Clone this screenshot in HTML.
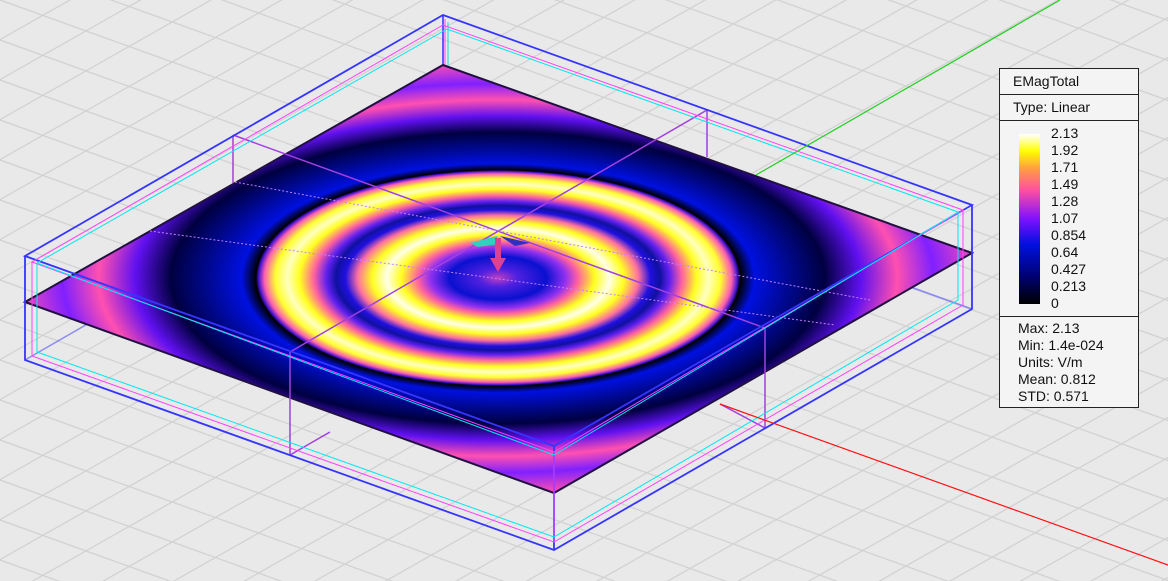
<!DOCTYPE html>
<html><head><meta charset="utf-8"><style>
html,body{margin:0;padding:0;width:1168px;height:581px;overflow:hidden;background:#e9e9e9;position:relative}
svg{position:absolute;left:0;top:0}
#leg{position:absolute;left:999px;top:68px;width:140px;height:340px;background:#f4f4f4;border:1px solid #222;box-sizing:border-box;font-family:"Liberation Sans",sans-serif;font-size:14px;color:#111}
#leg .h{height:25px;border-bottom:1px solid #222;padding-left:13px;line-height:24px}
#bar{position:absolute;left:19px;top:65px;width:21px;height:170px;background:linear-gradient(to top,#000 0%,#00006a 15%,#0010e0 35%,#8010ff 50%,#ff50a0 67%,#ffa040 80%,#ffff00 90%,#ffffff 100%)}
#nums{position:absolute;left:51px;top:56px;line-height:17px}
#st{position:absolute;left:0;top:247px;width:138px;border-top:1px solid #222;padding:3px 0 0 18px;line-height:17px;box-sizing:border-box}
</style></head><body>
<svg id="s" width="1168" height="581" xmlns="http://www.w3.org/2000/svg">
<defs>
<radialGradient id="rg" gradientUnits="userSpaceOnUse" cx="0" cy="0" r="1" gradientTransform="translate(498,278) scale(580.8,259.2)">
<stop offset="0" stop-color="#c040c0"/>
<stop offset="0.0333" stop-color="#5020e0"/>
<stop offset="0.0833" stop-color="#0a10d0"/>
<stop offset="0.1167" stop-color="#9030f0"/>
<stop offset="0.1375" stop-color="#ff60a0"/>
<stop offset="0.1667" stop-color="#ffff20"/>
<stop offset="0.1917" stop-color="#ffffe8"/>
<stop offset="0.2167" stop-color="#ffff20"/>
<stop offset="0.2417" stop-color="#ff70a0"/>
<stop offset="0.2625" stop-color="#2010e0"/>
<stop offset="0.2792" stop-color="#1010a0"/>
<stop offset="0.2958" stop-color="#6020f0"/>
<stop offset="0.3167" stop-color="#ff60a0"/>
<stop offset="0.3417" stop-color="#ffff20"/>
<stop offset="0.3625" stop-color="#ffffc0"/>
<stop offset="0.3833" stop-color="#ffff30"/>
<stop offset="0.4021" stop-color="#ff60b0"/>
<stop offset="0.4125" stop-color="#4010d0"/>
<stop offset="0.4167" stop-color="#000000"/>
<stop offset="0.4417" stop-color="#0010e0"/>
<stop offset="0.5" stop-color="#000890"/>
<stop offset="0.5625" stop-color="#000040"/>
<stop offset="0.625" stop-color="#6010f0"/>
<stop offset="0.6875" stop-color="#ff50b0"/>
<stop offset="0.75" stop-color="#8020ff"/>
<stop offset="0.8333" stop-color="#ff50b0"/>
<stop offset="1" stop-color="#9030ff"/>
</radialGradient>
<clipPath id="pc"><polygon points="25,302 443,65 972,253 554,493"/></clipPath>
</defs>
<g id="grid" stroke="#d2d2d2" stroke-width="1.3"></g>
<g fill="none" stroke-width="1.5">
<polyline points="25,360 443,119 972,309" stroke="#3030ff" opacity="0.5"/>
<line x1="443" y1="15" x2="443" y2="119" stroke="#3030ff"/>
<line x1="448" y1="22" x2="448" y2="118" stroke="#00e0e0" stroke-width="1"/>
<line x1="445" y1="19" x2="445" y2="118" stroke="#ff40ff" stroke-width="1"/>
</g>
<g clip-path="url(#pc)"><rect x="0" y="0" width="1168" height="581" fill="url(#rg)"/></g>
<polygon points="25,302 443,65 972,253 554,493" fill="none" stroke="#201040" stroke-width="2"/>
<g stroke="#a040e0" stroke-width="1.5" fill="none">
<line x1="233" y1="135" x2="233" y2="183"/>
<line x1="707" y1="110" x2="707" y2="157"/>
<line x1="290" y1="352" x2="290" y2="455"/>
<line x1="765" y1="328" x2="765" y2="428"/>
<line x1="233" y1="135" x2="765" y2="328"/>
<line x1="707" y1="110" x2="290" y2="352"/>
<polyline points="290,455 330,432"/>
<polyline points="765,428 720,404"/>
</g>
<g stroke="#c080ff" stroke-width="1" stroke-dasharray="2,2" fill="none">
<line x1="150" y1="231" x2="835" y2="325"/>
<line x1="235" y1="182" x2="870" y2="300"/>
</g>
<g fill="none">
<polygon points="25,256 443,15 972,205 554,446" stroke="#3535ff" stroke-width="1.8"/>
<polyline points="25,256 25,360 554,550 972,309 972,205" stroke="#3535ff" stroke-width="1.8"/>
<line x1="554" y1="446" x2="554" y2="550" stroke="#3535ff" stroke-width="1.8"/>
<polygon points="32,262 443,25 963,210 554,452" stroke="#ff40ff" stroke-width="1"/>
<polyline points="32,262 32,356 554,542 963,305 963,210" stroke="#ff40ff" stroke-width="1"/>
<line x1="554" y1="452" x2="554" y2="542" stroke="#ff40ff"/>
<polygon points="37,263 447,29 958,212 554,455" stroke="#00e8f0" stroke-width="1"/>
<polyline points="37,263 37,352 554,537 958,300 958,212" stroke="#00e8f0" stroke-width="1"/>
</g>
<line x1="756" y1="175" x2="1060" y2="0" stroke="#20d020" stroke-width="1.2"/>
<line x1="720" y1="404" x2="1168" y2="565" stroke="#ff1010" stroke-width="1.2"/>
<polygon points="470,243 497,236 498,244 478,247" fill="#30d0c0"/>
<polygon points="500,236 530,243 515,246" fill="#3030c0"/>
<rect x="495" y="238" width="6" height="22" fill="#e04090"/>
<polygon points="490,258 506,258 498,272" fill="#e04090"/>
</svg>
<div id="leg">
<div class="h">EMagTotal</div>
<div class="h">Type: Linear</div>
<div id="bar"></div>
<div id="nums">2.13<br>1.92<br>1.71<br>1.49<br>1.28<br>1.07<br>0.854<br>0.64<br>0.427<br>0.213<br>0</div>
<div id="st">Max: 2.13<br>Min: 1.4e-024<br>Units: V/m<br>Mean: 0.812<br>STD: 0.571</div>
</div>
<script>
var g=document.getElementById('grid'),h='';
for(var i=-40;i<60;i++){
 var c=i*40;
 h+='<line x1="-200" y1="'+(c-72)+'" x2="1400" y2="'+(c+504)+'"/>';
 h+='<line x1="-200" y1="'+(c+113)+'" x2="1400" y2="'+(c-794)+'"/>';
}
g.innerHTML=h;
</script>
</body></html>
